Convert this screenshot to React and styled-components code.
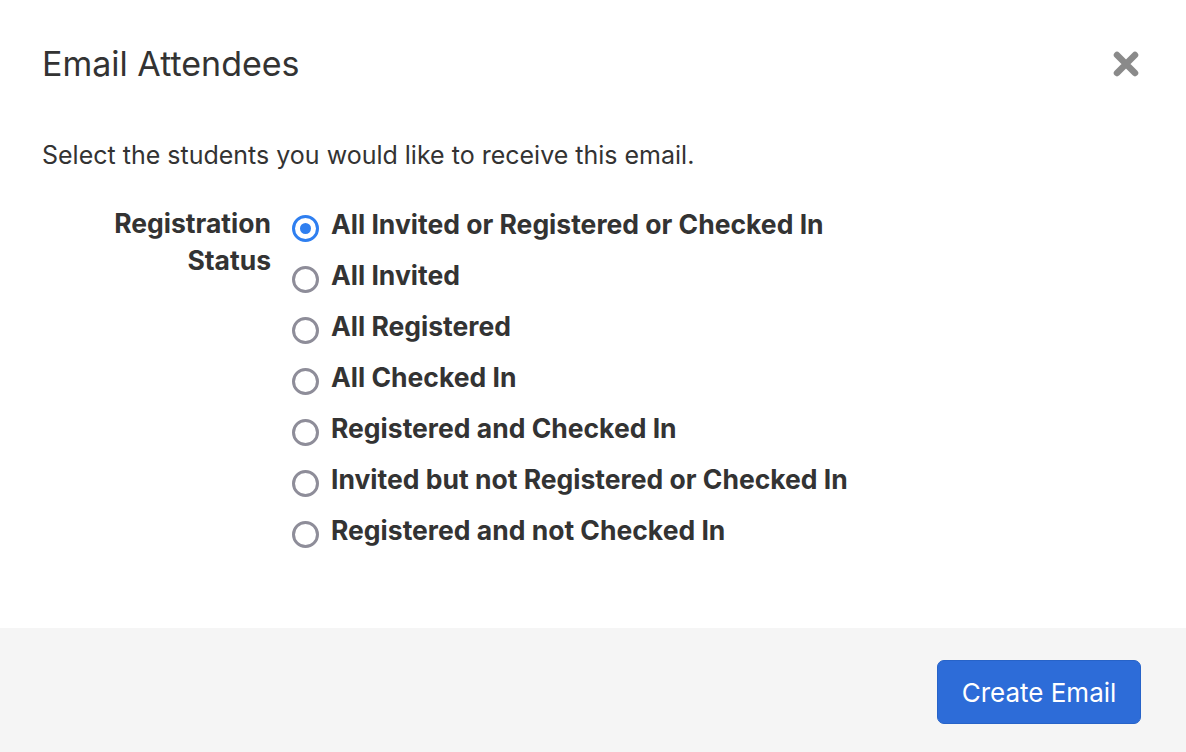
import React, { useState } from 'react';
import styled, { createGlobalStyle } from 'styled-components';

const GlobalStyle = createGlobalStyle`
  html, body {
    margin: 0;
    padding: 0;
    background: #ffffff;
  }
  body {
    font-family: Inter, "Liberation Sans", sans-serif;
    color: #333333;
  }
`;

const MODAL = styled.div`
  width: 1186px;
  height: 752px;
  display: flex;
  flex-direction: column;
  background: #ffffff;
`;

const HEADER = styled.div`
  display: flex;
  justify-content: space-between;
  align-items: center;
  padding: 44px 46px 0 42px;
  h2 {
    margin: 0;
    font-size: 34px;
    font-weight: 400;
    line-height: 40px;
    color: #333333;
  }
`;

const CLOSE = styled.button`
  border: none;
  background: none;
  padding: 0;
  cursor: pointer;
  width: 28px;
  height: 28px;
  display: flex;
  align-items: center;
  justify-content: center;
`;

const BODY = styled.div`
  flex: 1;
  padding: 56px 42px 0 42px;
  p {
    margin: 0 0 36px 0;
    font-size: 25px;
    line-height: 30px;
    color: #333333;
  }
`;

const FIELD = styled.div`
  display: flex;
  align-items: flex-start;
`;

const LABEL = styled.div`
  width: 229px;
  text-align: right;
  font-size: 26.5px;
  font-weight: 700;
  line-height: 37px;
  color: #333333;
  margin-top: -1px;
`;

const OPTIONS = styled.div`
  display: flex;
  flex-direction: column;
  gap: 15px;
  margin-left: 21px;
`;

const OPTION = styled.label`
  display: flex;
  align-items: center;
  gap: 12px;
  font-size: 26.5px;
  font-weight: 700;
  line-height: 36px;
  color: #333333;
  cursor: pointer;
  height: 36px;
  white-space: nowrap;
`;

const RADIO = styled.span`
  width: 27px;
  height: 27px;
  box-sizing: border-box;
  border-radius: 50%;
  border: ${p => (p.checked ? '3.5px solid #2f7ff0' : '3px solid #8e8d99')};
  display: flex;
  align-items: center;
  justify-content: center;
  margin-top: 8px;
  flex-shrink: 0;
  &::after {
    content: '';
    width: 11px;
    height: 11px;
    border-radius: 50%;
    background: ${p => (p.checked ? '#2f7ff0' : 'transparent')};
  }
`;

const FOOTER = styled.div`
  height: 124px;
  background: #f5f5f5;
  display: flex;
  justify-content: flex-end;
  align-items: flex-start;
  padding: 32px 45px 0 0;
  box-sizing: border-box;
`;

const PRIMARY = styled.button`
  width: 204px;
  height: 64px;
  border: 1px solid #2763c8;
  border-radius: 7px;
  background: #2d6cd8;
  color: #ffffff;
  font-family: Inter, "Liberation Sans", sans-serif;
  font-size: 26px;
  font-weight: 400;
  cursor: pointer;
`;

const statuses = [
    'All Invited or Registered or Checked In',
    'All Invited',
    'All Registered',
    'All Checked In',
    'Registered and Checked In',
    'Invited but not Registered or Checked In',
    'Registered and not Checked In',
];

const App = () => {
    const [selected, setSelected] = useState(0);

    return (<>
        <GlobalStyle />
        <MODAL>
            <HEADER>
                <h2>Email Attendees</h2>
                <CLOSE aria-label="Close">
                    <svg width="26" height="26" viewBox="0 0 26 26">
                        <path d="M4 4 L22 22 M22 4 L4 22" stroke="#8a8a8a" strokeWidth="6.5" strokeLinecap="round" />
                    </svg>
                </CLOSE>
            </HEADER>
            <BODY>
                <p>Select the students you would like to receive this email.</p>
                <FIELD>
                    <LABEL>Registration<br />Status</LABEL>
                    <OPTIONS>
                        {statuses.map((s, i) => (
                            <OPTION key={s} onClick={() => setSelected(i)}>
                                <RADIO checked={selected === i} />
                                {s}
                            </OPTION>
                        ))}
                    </OPTIONS>
                </FIELD>
            </BODY>
            <FOOTER>
                <PRIMARY>Create Email</PRIMARY>
            </FOOTER>
        </MODAL>
    </>);
};

export default App;
